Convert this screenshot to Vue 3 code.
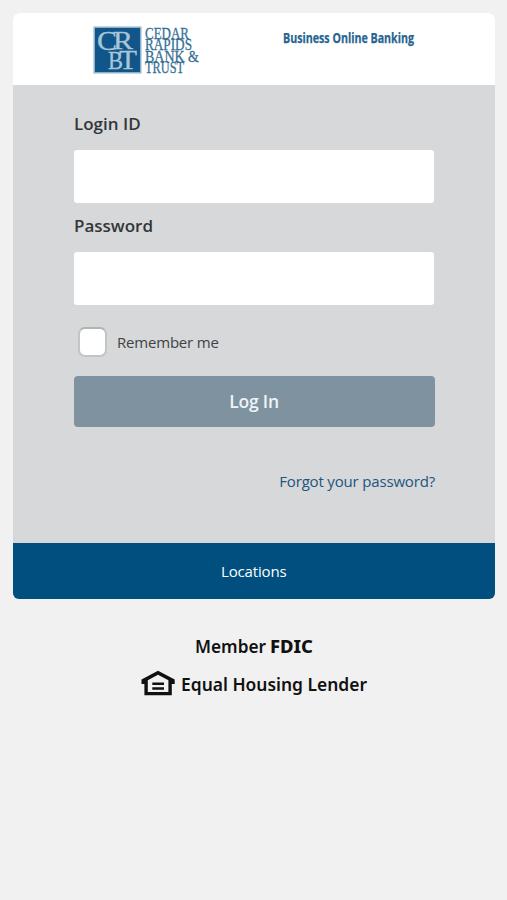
<script setup>
import { ref } from 'vue'

const loginId = ref('')
const password = ref('')
const remember = ref(false)
</script>

<template>
  <main class="page">
    <section class="card">
      <header class="brand">
        <svg class="logo" width="120" height="52" viewBox="0 0 120 52" role="img" aria-label="Cedar Rapids Bank &amp; Trust">
          <rect x="0.5" y="1.5" width="48" height="47" fill="#8fb0c6" />
          <rect x="2" y="3" width="45" height="44" fill="#11568a" />
          <g class="monogram">
            <text x="4" y="25" font-size="28" textLength="20" lengthAdjust="spacingAndGlyphs">C</text>
            <text x="20" y="24" font-size="26" textLength="20" lengthAdjust="spacingAndGlyphs">R</text>
            <text x="15" y="44" font-size="26" textLength="15" lengthAdjust="spacingAndGlyphs">B</text>
            <text x="26" y="44" font-size="27" textLength="18" lengthAdjust="spacingAndGlyphs">T</text>
          </g>
          <g class="wordmark">
            <text x="52" y="14" textLength="44" lengthAdjust="spacingAndGlyphs">CEDAR</text>
            <text x="52" y="25.3" textLength="47" lengthAdjust="spacingAndGlyphs">RAPIDS</text>
            <text x="52" y="36.6" textLength="54" lengthAdjust="spacingAndGlyphs">BANK &amp;</text>
            <text x="52" y="47.8" textLength="39" lengthAdjust="spacingAndGlyphs">TRUST</text>
          </g>
        </svg>
        <svg class="product" width="150" height="32" viewBox="0 0 150 32">
          <text x="1" y="18" textLength="131" lengthAdjust="spacingAndGlyphs">Business Online Banking</text>
        </svg>
      </header>

      <form class="form" @submit.prevent>
        <label class="label" for="login">Login ID</label>
        <input id="login" v-model="loginId" class="field" type="text" />
        <label class="label second" for="password">Password</label>
        <input id="password" v-model="password" class="field" type="password" />
        <label class="remember">
          <input v-model="remember" class="check" type="checkbox" />
          <span>Remember me</span>
        </label>
        <button class="submit" type="submit">Log In</button>
        <a class="forgot" href="#">Forgot your password?</a>
      </form>

      <nav class="links"><a href="#">Locations</a></nav>
    </section>

    <footer class="legal">
      <svg width="236" height="72" viewBox="0 0 236 72">
        <text x="55" y="21" textLength="71" lengthAdjust="spacingAndGlyphs">Member</text>
        <text class="heavy" x="130" y="21" textLength="43" lengthAdjust="spacingAndGlyphs">FDIC</text>
        <path d="M18 38.7 L34.7 47.5 V52 H31.8 V63.2 H4.4 V52 H1.5 V47.5 Z M18 42.8 L7.8 48.2 V60 H28.4 V48.2 Z" fill="#111" fill-rule="evenodd" />
        <path d="M12.3 51.8 H24 M12.3 56.5 H24" stroke="#111" stroke-width="2.6" />
        <text x="41" y="59" textLength="186" lengthAdjust="spacingAndGlyphs">Equal Housing Lender</text>
      </svg>
    </footer>
  </main>
</template>

<style>
body {
  margin: 0;
  background: #f1f1f1;
}
</style>

<style scoped>
.page {
  box-sizing: border-box;
  min-height: 900px;
  padding: 13px 12.5px 0 13px;
  background: #f1f1f1;
  font-family: "Open Sans", "Noto Sans", sans-serif;
}
.card {
  overflow: hidden;
  border-radius: 6px;
  background: #d6d8d9;
}
.brand {
  box-sizing: border-box;
  display: flex;
  align-items: flex-start;
  height: 72px;
  padding: 12px 0 0 80px;
  background: #fff;
}
.product {
  margin: 0 0 0 69px;
}
.monogram {
  font-family: "Liberation Serif", serif;
  fill: #a9c6d8;
  stroke: #a9c6d8;
  stroke-width: 0.3px;
}
.wordmark {
  font-family: "Liberation Serif", serif;
  font-size: 17px;
  fill: #356f94;
  stroke: #356f94;
  stroke-width: 0.3px;
}
.product text {
  font-family: "Open Sans", sans-serif;
  font-size: 14.5px;
  font-weight: 700;
  fill: #286490;
  stroke: #286490;
  stroke-width: 0.25px;
}
.form {
  box-sizing: border-box;
  display: flex;
  flex-direction: column;
  height: 458px;
  padding: 26px 60.5px 0 61px;
}
.label {
  height: 24px;
  line-height: 25px;
  font-size: 17px;
  font-weight: 600;
  color: #333638;
}
.second {
  margin-top: 11px;
  line-height: 24px;
}
.field {
  box-sizing: border-box;
  width: 100%;
  height: 53px;
  margin: 15px 0 0;
  padding: 0 14px;
  border: 0;
  border-radius: 3px;
  background: #fff;
  font: 400 17px "Open Sans", sans-serif;
}
.second + .field {
  margin-top: 14px;
}
.remember {
  display: flex;
  align-items: center;
  gap: 10px;
  height: 30px;
  margin: 22px 0 0 4px;
  font-size: 15px;
  line-height: 20px;
  letter-spacing: -0.2px;
  color: #404345;
}
.check {
  appearance: none;
  box-sizing: border-box;
  width: 29px;
  height: 30px;
  margin: 0;
  border: 2px solid #c3c4c4;
  border-top-color: #b2b3b3;
  border-radius: 7px;
  background: #fff;
}
.submit {
  height: 51px;
  margin: 19px -0.5px 0;
  padding: 0 0 2px;
  border: 0;
  border-radius: 4px;
  background: #7f929f;
  color: #eef3f6;
  font: 600 17.5px "Open Sans", sans-serif;
  letter-spacing: -0.2px;
}
.forgot {
  align-self: flex-end;
  margin: 43px -1px 0 0;
  line-height: 22px;
  font-size: 15px;
  letter-spacing: -0.17px;
  color: #1d557f;
  text-decoration: none;
}
.links {
  display: flex;
  align-items: center;
  justify-content: center;
  height: 56px;
  background: #004f7e;
}
.links a {
  color: #fff;
  font-size: 15px;
  letter-spacing: -0.15px;
  text-decoration: none;
}
.legal {
  display: flex;
  padding: 33px 0 0 127px;
}
.legal text {
  font-family: "Noto Sans", "Open Sans", sans-serif;
  font-size: 18px;
  font-weight: 600;
  fill: #111;
}
.legal .heavy {
  font-weight: 800;
}
</style>
